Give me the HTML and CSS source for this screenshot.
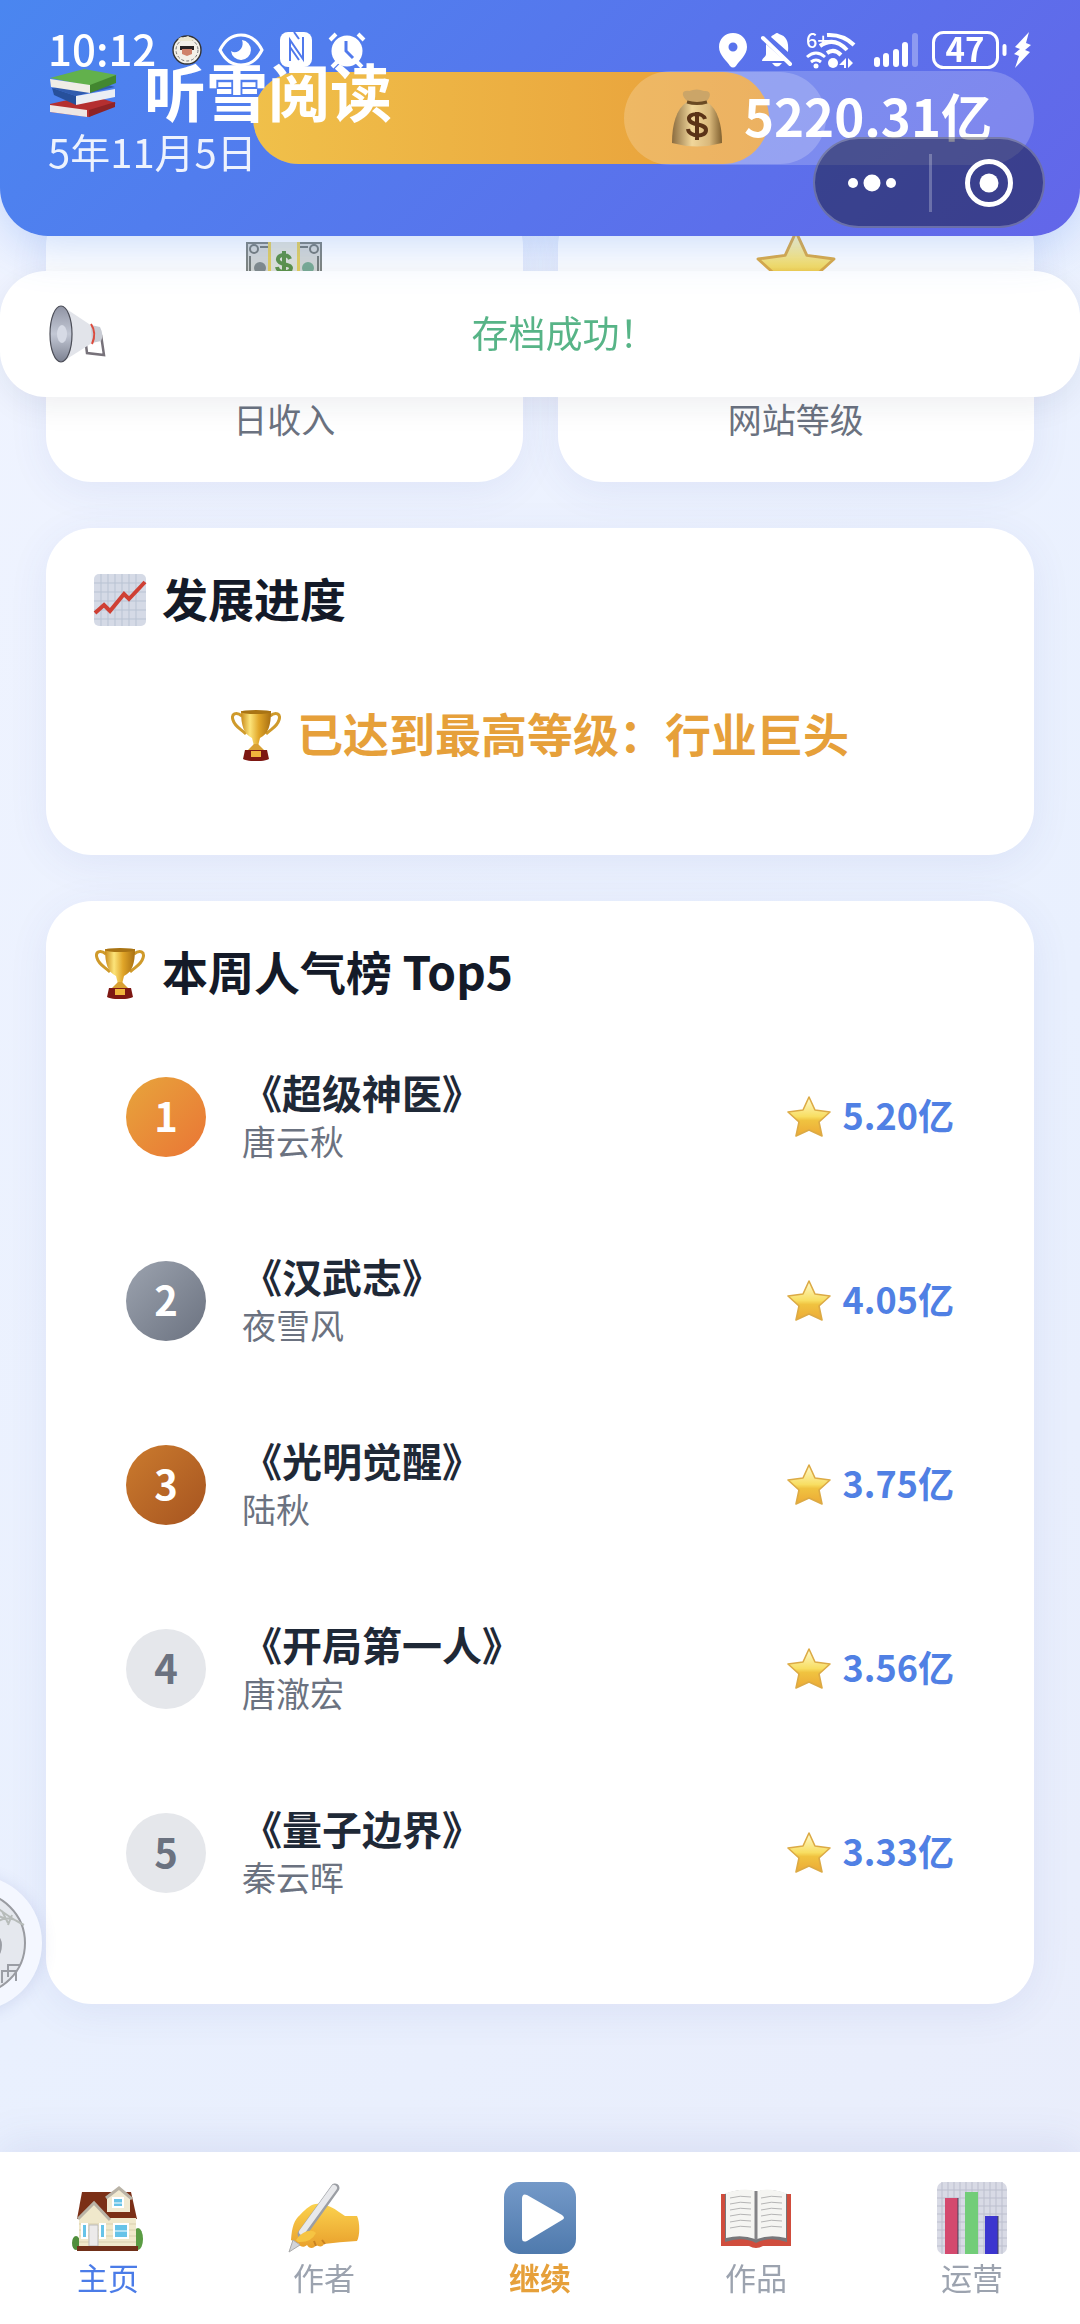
FILE: index.html
```html
<!DOCTYPE html>
<html lang="zh-CN">
<head>
  <meta charset="UTF-8">
  <meta name="viewport" content="width=device-width, initial-scale=1.0">
  <title>听雪阅读</title>
  <link rel="stylesheet" href="styles.css">
</head>
<body>
  <!-- shared icons -->
  <svg class="icon-defs" aria-hidden="true">
    <defs>
      <linearGradient id="starFill" x1="0" y1="0" x2="0" y2="1">
        <stop offset="0" stop-color="#fffbd0"/>
        <stop offset="0.5" stop-color="#f8de62"/>
        <stop offset="0.6" stop-color="#f0c340"/>
        <stop offset="1" stop-color="#eca936"/>
      </linearGradient>
      <linearGradient id="cupFill" x1="0" y1="0" x2="1" y2="0">
        <stop offset="0" stop-color="#c98a1a"/>
        <stop offset="0.3" stop-color="#fce47a"/>
        <stop offset="0.6" stop-color="#e0a528"/>
        <stop offset="1" stop-color="#a86f12"/>
      </linearGradient>
      <linearGradient id="bagFill" x1="0" y1="0" x2="1" y2="0">
        <stop offset="0" stop-color="#8b6c3f"/>
        <stop offset="0.4" stop-color="#f1d79b"/>
        <stop offset="0.75" stop-color="#d9b87b"/>
        <stop offset="1" stop-color="#80602f"/>
      </linearGradient>
      <linearGradient id="playFill" x1="0" y1="0" x2="0" y2="1">
        <stop offset="0" stop-color="#7499c8"/>
        <stop offset="1" stop-color="#4f7aad"/>
      </linearGradient>
      <linearGradient id="hornFill" x1="0" y1="0" x2="0" y2="1">
        <stop offset="0" stop-color="#8f93a3"/>
        <stop offset="0.5" stop-color="#c3c8d5"/>
        <stop offset="1" stop-color="#7c8191"/>
      </linearGradient>
      <linearGradient id="handFill" x1="0" y1="0" x2="0" y2="1">
        <stop offset="0" stop-color="#fbd24e"/>
        <stop offset="1" stop-color="#e9a02c"/>
      </linearGradient>
    </defs>
    <symbol id="star" viewBox="0 0 44 42">
      <path d="M22 1l6 13 15 2-11 10 3 14-13-6-13 6 3-14L1 16l15-2z" fill="url(#starFill)" stroke="#dcaa45" stroke-width="1.6" stroke-linejoin="round"/>
    </symbol>
    <symbol id="trophy" viewBox="0 0 50 52">
      <path d="M11 7C5 2 0 5 2 11c2 7 8 9 13 14M39 7c6-5 11-2 9 4-2 7-8 9-13 14" fill="none" stroke="#cf9a2b" stroke-width="3"/>
      <path d="M10 2h30c0 15-3 23-11 27l-2 8h-4l-2-8C13 25 10 17 10 2z" fill="url(#cupFill)"/>
      <ellipse cx="25" cy="3" rx="15" ry="2" fill="#a97414"/>
      <path d="M23 35h4l6 6H17z" fill="#d8a033"/>
      <path d="M14 41h22l2 9c-6 3-20 3-26 0z" fill="#7d1712"/>
      <rect x="20" y="42" width="10" height="6" fill="#efb43c"/>
    </symbol>
  </svg>

  <header class="header">
    <div class="progress-track"><div class="progress-fill"></div></div>

    <div class="status-bar">
      <div class="status-left">
        <span class="clock">10:12</span>
        <svg width="30" height="30" viewBox="0 0 30 30">
          <circle cx="15" cy="15" r="14" fill="#f3f0e8" stroke="#333" stroke-width="1.4"/>
          <circle cx="15" cy="15" r="11" fill="none" stroke="#777" stroke-dasharray="3 2"/>
          <path d="M8 11h14v4H8z" fill="#282222"/>
          <path d="M10 14h10v5l-5 2-5-2z" fill="#cf826b"/>
          <path d="M6 4l3-2 3 1 4-2 3 2 4 1-3 2H8z" fill="#ece7cf"/>
        </svg>
        <svg width="46" height="36" viewBox="0 0 46 36">
          <path d="M2 18C12-2 34-2 44 18 34 38 12 38 2 18z" fill="none" stroke="#fff" stroke-width="3"/>
          <path d="M24 8a10 10 0 1 1-11 11c6 4 14-3 11-11z" fill="#fff"/>
        </svg>
        <svg width="32" height="36" viewBox="0 0 32 36">
          <rect width="32" height="35" rx="8" fill="#fff"/>
          <path d="M10 29V8l13 19V5M10 15l9 13" fill="none" stroke="#5079ec" stroke-width="2"/>
          <path d="M14 0l5 7" stroke="#5079ec" stroke-width="2"/>
        </svg>
        <svg width="38" height="36" viewBox="0 0 38 36">
          <circle cx="19" cy="19" r="15.5" fill="#fff"/>
          <path d="M2 8l6-6M36 8l-6-6M9 30l-5 5M29 30l5 5" stroke="#fff" stroke-width="4"/>
          <path d="M18 9v10l7 7" fill="none" stroke="#5079ec" stroke-width="3"/>
        </svg>
      </div>
      <div class="status-right">
        <svg width="28" height="36" viewBox="0 0 28 36">
          <path fill-rule="evenodd" d="M14 1C6 1 0 7 0 15c0 8 8 14 11 19q3 3 6 0c3-5 11-11 11-19C28 7 22 1 14 1zm0 9.5a4.500 4.500 0 1 1 0 9 4.500 4.500 0 0 1 0-9z" fill="#fff"/>
        </svg>
        <svg width="31" height="36" viewBox="0 0 31 36">
          <path d="M10 5c1-2 3-2 4-3q2-2 4 0c7 2 10 7 9 18zM5 12l19 17H1c0-3 4-4 4-7zM11 31h10q-5 7-10 0z" fill="#fff"/>
          <path d="M2 6l27 26" stroke="#fff" stroke-width="4" stroke-linecap="round"/>
        </svg>
        <svg width="54" height="38" viewBox="0 0 54 38">
          <text x="0" y="17" class="wifi-gen">6+</text>
          <g fill="none" stroke="#fff" stroke-width="4">
            <path d="M21 4q16-1 27 10M14 15q14-10 27 4M21 22q7-5 14 2"/>
            <path d="M1 26q9-8 18 0M5 31q5-4 10 0" stroke-width="3"/>
          </g>
          <circle cx="10" cy="35" r="2.5" fill="#fff"/>
          <circle cx="27" cy="32" r="5" fill="#fff"/>
          <path d="M40 27v10h-2v-3h-5zM42 27l5 5-5 5z" fill="#fff"/>
        </svg>
        <svg width="44" height="36" viewBox="0 0 44 36">
          <g stroke="#fff" stroke-width="6" stroke-linecap="round">
            <path d="M3 28v4M12 24v8M22 20v12M31 13v19"/>
            <path d="M41 4v28" opacity="0.3"/>
          </g>
        </svg>
        <svg width="99" height="38" viewBox="0 0 99 38">
          <rect x="1.5" y="1.5" width="64" height="35" rx="10" fill="none" stroke="#fff" stroke-width="3"/>
          <text x="33" y="31" class="battery-text">47</text>
          <path d="M72.500 15v8" stroke="#fff" stroke-width="4" stroke-linecap="round"/>
          <path d="M97 1L83 16l5 2-6 5 5 2-4 12 15-16-5-2 6-5-5-2z" fill="#fff"/>
        </svg>
      </div>
    </div>

    <div class="header-row">
      <div class="brand">
        <h1>
          <svg width="70" height="50" viewBox="0 0 70 50">
            <path d="M2 35l40-9 26 8-27 14-39-5z" fill="#b52f30"/>
            <path d="M2 36l37 5v7L2 43z" fill="#eee6e3"/>
            <path d="M41 41l26-8v5L41 48z" fill="#8f2325"/>
            <path d="M4 19l24 8 39-9-27-8z" fill="#315cae"/>
            <path d="M28 27l39-7v8l-39 8z" fill="#eaeef4"/>
            <path d="M4 19l24 8v9L6 26z" fill="#27509b"/>
            <path d="M2 9l34-9 33 6-27 11z" fill="#62b14c"/>
            <path d="M2 10l40 6v8L3 18z" fill="#efede6"/>
            <path d="M42 16L68 6v8L42 24z" fill="#42872f"/>
          </svg>
          <span>听雪阅读</span>
        </h1>
        <p class="game-date">5年11月5日</p>
      </div>
      <div class="money">
        <svg width="50" height="58" viewBox="0 0 50 58">
          <path d="M15 13C4 20 0 36 0 54q25 7 50 0c0-18-4-34-15-41z" fill="url(#bagFill)"/>
          <path d="M16 13C8 6 10 1 17 2q8-3 15 0c7-1 8 5 2 11z" fill="#cba568"/>
          <path d="M15 13q10 3 20 0" fill="none" stroke="#6b4a23" stroke-width="3"/>
          <path d="M33 30c-2-7-17-6-16 0 1 7 17 4 17 11 0 8-17 7-18-1M25 23v28" fill="none" stroke="#5b3317" stroke-width="4"/>
        </svg>
        <span>5220.31亿</span>
      </div>
    </div>

    <div class="capsule">
      <button type="button" aria-label="更多">
        <svg width="50" height="20" viewBox="0 0 50 20" fill="#fff">
          <circle cx="6" cy="10" r="5"/><circle cx="25" cy="10" r="8.5"/><circle cx="44" cy="10" r="5"/>
        </svg>
      </button>
      <button type="button" aria-label="关闭">
        <svg width="50" height="50" viewBox="0 0 50 50">
          <circle cx="25" cy="25" r="21.5" fill="none" stroke="#fff" stroke-width="5"/>
          <circle cx="25" cy="25" r="9.5" fill="#fff"/>
        </svg>
      </button>
    </div>
  </header>

  <div class="toast" role="status">
    <svg width="58" height="58" viewBox="0 0 58 58">
      <path d="M38 40l1 8 17 2-3-20" fill="none" stroke="#77727a" stroke-width="2.5"/>
      <path d="M14 1l30 20q6 8 0 17L14 57z" fill="#e2e4ea"/>
      <path d="M43 20l9 2q4 8 1 14l-9 2z" fill="#c9ccd4"/>
      <path d="M43 19q6 9 1 20" fill="none" stroke="#dc4b3d" stroke-width="2"/>
      <ellipse cx="13" cy="29" rx="11" ry="28" fill="url(#hornFill)" stroke="#4b4d57" stroke-width="1.2"/>
      <ellipse cx="14" cy="29" rx="5" ry="9" fill="#d6dae5"/>
    </svg>
    <p>存档成功！</p>
  </div>

  <main class="content">
    <!-- stats -->
    <section class="stats">
      <div class="card stat-card">
        <svg width="76" height="76" viewBox="0 0 76 76">
          <rect x="1" y="13" width="74" height="50" fill="#d6d8d4" stroke="#81857f" stroke-width="2"/>
          <g fill="none" stroke="#777c77" stroke-width="2">
            <circle cx="8" cy="19" r="4"/><circle cx="68" cy="19" r="4"/>
            <path d="M14 17h9M53 17h9M4 26v30M72 26v30"/>
          </g>
          <circle cx="14" cy="38" r="6" fill="#838b8b"/><circle cx="62" cy="38" r="6" fill="#7aab92"/>
          <rect x="22" y="12" width="32" height="52" fill="#e5cf5b"/>
          <rect x="25" y="12" width="26" height="52" fill="#e3e4da"/>
          <path d="M44 29c-2-6-13-5-12 1s13 3 13 8-13 6-14-1M38 21v28" fill="none" stroke="#5d9246" stroke-width="4"/>
        </svg>
        <p>日收入</p>
      </div>
      <div class="card stat-card">
        <svg width="80" height="76"><use href="#star"/></svg>
        <p>网站等级</p>
      </div>
    </section>

    <!-- progress -->
    <section class="card">
      <h2>
        <svg width="52" height="52" viewBox="0 0 52 52">
          <rect width="52" height="52" rx="5" fill="#d5dae6"/>
          <path d="M7 0v52M14 0v52M21 0v52M28 0v52M35 0v52M42 0v52M0 9h52M0 18h52M0 27h52M0 36h52M0 45h52" stroke="#b9c3d3"/>
          <path d="M1 39l9-8 6 6 14-17 5 5L51 8" fill="none" stroke="#cf4034" stroke-width="4"/>
        </svg>
        <span>发展进度</span>
      </h2>
      <p class="max-level">
        <svg width="50" height="52"><use href="#trophy"/></svg>
        <span>已达到最高等级：行业巨头</span>
      </p>
    </section>

    <!-- weekly ranking -->
    <section class="card">
      <h2>
        <svg width="52" height="52"><use href="#trophy"/></svg>
        <span>本周人气榜 Top5</span>
      </h2>
      <ol class="rank-list">
        <li>
          <span class="rank rank-1">1</span>
          <div class="book"><h3>《超级神医》</h3><p>唐云秋</p></div>
          <div class="score"><svg width="44" height="42"><use href="#star"/></svg><span>5.20亿</span></div>
        </li>
        <li>
          <span class="rank rank-2">2</span>
          <div class="book"><h3>《汉武志》</h3><p>夜雪风</p></div>
          <div class="score"><svg width="44" height="42"><use href="#star"/></svg><span>4.05亿</span></div>
        </li>
        <li>
          <span class="rank rank-3">3</span>
          <div class="book"><h3>《光明觉醒》</h3><p>陆秋</p></div>
          <div class="score"><svg width="44" height="42"><use href="#star"/></svg><span>3.75亿</span></div>
        </li>
        <li>
          <span class="rank">4</span>
          <div class="book"><h3>《开局第一人》</h3><p>唐澈宏</p></div>
          <div class="score"><svg width="44" height="42"><use href="#star"/></svg><span>3.56亿</span></div>
        </li>
        <li>
          <span class="rank">5</span>
          <div class="book"><h3>《量子边界》</h3><p>秦云晖</p></div>
          <div class="score"><svg width="44" height="42"><use href="#star"/></svg><span>3.33亿</span></div>
        </li>
      </ol>
    </section>
  </main>

  <button type="button" class="float-ball" aria-label="悬浮球">
    <svg width="104" height="104" viewBox="0 0 104 104">
      <circle cx="52" cy="52" r="51" fill="#e5e8ee" stroke="#999ba1" stroke-width="2"/>
      <path d="M74 16q8 6 14 10t14 8M76 30q12-6 22 2M80 20l6 12M90 24l-4 10M74 24l10 4" fill="none" stroke="#b7bcba" stroke-width="2"/>
      <path d="M80 92V80h14M86 86V74h12M86 80h8v10" fill="none" stroke="#9a9da4" stroke-width="2"/>
      <path d="M77 48q3 6 0 14" fill="none" stroke="#9a9da4" stroke-width="3"/>
    </svg>
  </button>

  <nav class="tab-bar">
    <a href="#home" class="active">
      <svg width="72" height="72" viewBox="0 0 72 72">
        <ellipse cx="4" cy="61" rx="4" ry="7" fill="#4f8e3b"/>
        <ellipse cx="66" cy="57" rx="5" ry="11" fill="#5a9c43"/>
        <path d="M10 10h49l6 27H5z" fill="#7b2f16"/>
        <path d="M7 36L22 22l15 14h27v28H7z" fill="#f0e8cb"/>
        <path d="M7 42h57M7 48h57M7 54h57M7 60h57" stroke="#d9cfae"/>
        <path d="M35 15L47 5l11 10v15H35z" fill="#f1ead2"/>
        <path d="M34 16L47 6l13 11M6 37l16-16 16 17" fill="none" stroke="#b9b3a6" stroke-width="3"/>
        <path d="M41 16h10v9H41zM42 42h14v14H42zM10 42h5v14h-5zM28 42h5v14h-5z" fill="#67c3e8" stroke="#fff" stroke-width="2"/>
        <path d="M17 43h9v21h-9z" fill="#eceaea" stroke="#bbb"/>
        <path d="M42 49h14M41 21h10" stroke="#fff"/>
        <path d="M5 64h61v5H5z" fill="#713019"/>
      </svg>
      主页
    </a>
    <a href="#authors">
      <svg width="72" height="72" viewBox="0 0 72 72">
        <path d="M3 58C4 45 6 38 12 33c7-7 12-12 20-11q10 1 19 8l6 4h12c3 6 3 20 0 25q-18 1-33 3c-1 3-5 3-8 1-2 4-7 4-9 0-3 3-7 2-8-1z" fill="url(#handFill)"/>
        <path d="M28 64l-2-5M37 62l-3-4" fill="none" stroke="#c98222" stroke-width="2"/>
        <path d="M47 6L14 52" stroke="#9b9ea4" stroke-width="9" stroke-linecap="round"/>
        <path d="M46 6L14 50" stroke="#e8e9ec" stroke-width="6" stroke-linecap="round"/>
        <path d="M5 58l7 5-11 7z" fill="#d2d4d9" stroke="#aaa"/>
        <path d="M8 58C15 48 24 47 28 51q-5 10-18 9z" fill="#f6c442"/>
      </svg>
      作者
    </a>
    <a href="#continue" class="continue">
      <svg width="72" height="72" viewBox="0 0 72 72">
        <rect width="72" height="72" rx="15" fill="url(#playFill)"/>
        <path d="M18 17q0-6 5-4l35 20q4 3 0 5L23 59q-5 2-5-3z" fill="#fff"/>
      </svg>
      继续
    </a>
    <a href="#works">
      <svg width="72" height="72" viewBox="0 0 72 72">
        <path d="M1 12h70v52H43q-7 4-14 0H1z" fill="#d04d3d"/>
        <path d="M5 12q18-7 31-2 13-5 31 2v48q-18-6-31 1-13-7-31-1z" fill="#77777a"/>
        <path d="M6 11q18-6 29-2v48q-13-5-29-1zM66 11q-18-6-29-2v48q13-5 29-1z" fill="#f5f5f2"/>
        <path d="M36 9v49" stroke="#838386" stroke-width="3"/>
        <path d="M10 16q10-3 21-1M10 22q10-3 21-1M10 28q10-3 21-1M10 34q10-3 21-1M10 40q10-3 21-1M10 46q10-3 21-1M41 16q10-3 21-1M41 22q10-3 21-1M41 28q10-3 21-1M41 34q10-3 21-1M41 40q10-3 21-1M41 46q10-3 21-1" fill="none" stroke="#b5b5b5"/>
      </svg>
      作品
    </a>
    <a href="#operation">
      <svg width="72" height="72" viewBox="0 0 72 72">
        <rect x="1" width="70" height="72" rx="7" fill="#d8dae5"/>
        <path d="M6 0v72M12 0v72M18 0v72M24 0v72M30 0v72M36 0v72M42 0v72M48 0v72M54 0v72M60 0v72M66 0v72M1 8h70M1 16h70M1 24h70M1 32h70M1 40h70M1 48h70M1 56h70M1 64h70" stroke="#bcbfce"/>
        <rect x="9" y="16" width="13" height="56" fill="#d4496e"/>
        <rect x="29" y="10" width="13" height="62" fill="#72cd78"/>
        <rect x="49" y="34" width="13" height="38" fill="#3c35cf"/>
        <path d="M22 16v56M62 34v38" stroke="#42435a"/>
      </svg>
      运营
    </a>
  </nav>
</body>
</html>
```

FILE: styles.css
```css
/* Global Styles */
* {
  box-sizing: border-box;
  margin: 0;
  padding: 0;
}

body {
  min-height: 100vh;
  font-family: "Noto Sans CJK SC", "Noto Sans", sans-serif;
  background: linear-gradient(135deg, #f0f4ff 0%, #e9f0fe 60%, #e9edfb 100%);
  color: #141a28;
}

svg {
  display: block;
  flex-shrink: 0;
  overflow: visible;
}

button {
  border: none;
  background: none;
  cursor: pointer;
}

.icon-defs {
  position: absolute;
  width: 0;
  height: 0;
}

/* Header */
.header {
  position: fixed;
  top: 0;
  left: 0;
  right: 0;
  z-index: 20;
  height: 236px;
  padding: 58px 46px 0 48px;
  color: #fff;
  background: linear-gradient(135deg, #4a86f0 0%, #6366e9 100%);
  border-radius: 0 0 48px 48px;
  box-shadow: 0 8px 48px rgba(74, 134, 240, 0.3);
}

.progress-track {
  position: absolute;
  top: 72px;
  left: 253px;
  right: 254px;
  height: 92px;
  border-radius: 46px;
  background: rgba(255, 255, 255, 0.2);
}

.progress-fill {
  width: 90%;
  height: 100%;
  border-radius: 46px;
  background: linear-gradient(90deg, #f0c04a, #e89e3a);
}

.status-bar {
  position: absolute;
  top: 20px;
  left: 48px;
  right: 49px;
  display: flex;
  align-items: center;
  justify-content: space-between;
  height: 60px;
}

.status-left,
.status-right {
  display: flex;
  align-items: center;
  gap: 14px;
}

.status-left {
  gap: 16px;
}

.clock {
  padding-bottom: 4px;
  font-size: 42px;
  line-height: 56px;
  font-weight: 500;
}

.wifi-gen {
  font-size: 20px;
  font-weight: 500;
  fill: #fff;
}

.battery-text {
  font-size: 33px;
  font-weight: 700;
  fill: #fff;
  text-anchor: middle;
}

.header-row {
  position: relative;
  display: flex;
  justify-content: space-between;
  align-items: flex-start;
}

.brand h1 {
  display: flex;
  align-items: center;
  gap: 26px;
  font-size: 62px;
  line-height: 64px;
  font-weight: 700;
}

.brand h1 svg {
  margin-top: 8px;
}

.game-date {
  font-size: 40px;
  line-height: 58px;
  opacity: 0.9;
}

.money {
  display: flex;
  align-items: center;
  gap: 22px;
  height: 94px;
  margin-top: 13px;
  padding: 0 42px 0 48px;
  border-radius: 47px;
  background: rgba(255, 255, 255, 0.2);
  font-size: 51px;
  font-weight: 700;
}

.capsule {
  position: absolute;
  top: 137px;
  right: 35px;
  display: flex;
  width: 232px;
  height: 91px;
  border: 2px solid rgba(255, 255, 255, 0.25);
  border-radius: 46px;
  background: rgba(20, 22, 50, 0.5);
}

.capsule button {
  display: flex;
  flex: 1;
  align-items: center;
  justify-content: center;
}

.capsule button + button::before {
  content: "";
  width: 3px;
  height: 58px;
  margin-right: 32px;
  background: rgba(255, 255, 255, 0.25);
}

.capsule button + button {
  justify-content: flex-start;
}

/* Toast */
.toast {
  position: fixed;
  top: 271px;
  left: 0;
  right: 0;
  z-index: 10;
  display: flex;
  align-items: center;
  gap: 4px;
  height: 126px;
  padding: 0 62px 0 48px;
  border-radius: 46px;
  background: #fff;
  box-shadow: 0 8px 32px rgba(30, 40, 80, 0.08);
}

.toast p {
  flex: 1;
  padding-bottom: 4px;
  font-size: 37px;
  text-align: center;
  color: #57b487;
}

/* Cards */
.content {
  display: flex;
  flex-direction: column;
  gap: 46px;
  padding: 200px 46px 320px;
}

.card {
  padding: 48px;
  border-radius: 46px;
  background: #fff;
  box-shadow: 0 8px 40px rgba(70, 80, 160, 0.08);
}

.card h2 {
  display: flex;
  align-items: center;
  gap: 16px;
  height: 48px;
  font-size: 46px;
  line-height: 48px;
  font-weight: 700;
}

/* lift the text to the optical middle of its icon */
.money span,
.card h2 span,
.max-level span,
.score span {
  padding-bottom: 6px;
}

.stats {
  display: grid;
  grid-template-columns: 1fr 1fr;
  gap: 35px;
}

.stat-card {
  display: flex;
  flex-direction: column;
  align-items: center;
  justify-content: space-between;
  height: 282px;
  padding: 30px 0 39px;
  font-size: 34px;
  line-height: 48px;
  color: #6b7280;
}

.max-level {
  display: flex;
  align-items: center;
  justify-content: center;
  gap: 16px;
  height: 144px;
  margin-top: 39px;
  font-size: 46px;
  font-weight: 700;
  color: #e6a03a;
}

/* Ranking */
.rank-list {
  margin-top: 39px;
  list-style: none;
}

.rank-list li {
  display: flex;
  align-items: center;
  gap: 36px;
  margin-bottom: 22px;
  padding: 30px 32px;
}

.rank {
  width: 80px;
  height: 80px;
  border-radius: 50%;
  font-size: 40px;
  line-height: 76px;
  font-weight: 700;
  text-align: center;
  color: #6b7280;
  background: #e5e7eb;
}

.rank-1,
.rank-2,
.rank-3 {
  color: #fff;
}

.rank-1 {
  background: linear-gradient(135deg, #e7a53c, #ea7535);
}

.rank-2 {
  background: linear-gradient(135deg, #9ca3af, #6b7280);
}

.rank-3 {
  background: linear-gradient(135deg, #cb7b2e, #a65420);
}

.book {
  flex: 1;
  padding-bottom: 4px;
}

.book h3 {
  font-size: 40px;
  line-height: 52px;
  font-weight: 700;
  color: #1f2937;
}

.book p {
  font-size: 34px;
  line-height: 46px;
  color: #6b7280;
}

.score {
  display: flex;
  align-items: center;
  gap: 12px;
  font-size: 36px;
  font-weight: 700;
  color: #5080e4;
}

/* Floating button */
.float-ball {
  position: fixed;
  top: 1875px;
  left: -94px;
  z-index: 5;
  padding: 16px;
  border-radius: 50%;
  background: #f4f7ff;
  box-shadow: 0 2px 16px rgba(70, 80, 160, 0.15);
}

/* Bottom tabs */
.tab-bar {
  position: fixed;
  left: 0;
  right: 0;
  bottom: 0;
  z-index: 10;
  display: flex;
  height: 172px;
  padding-top: 30px;
  background: #fff;
  box-shadow: 0 -8px 40px rgba(70, 80, 160, 0.1);
}

.tab-bar a {
  display: flex;
  flex: 1;
  flex-direction: column;
  align-items: center;
  font-size: 31px;
  line-height: 45px;
  color: #9ca3af;
  text-decoration: none;
}

.tab-bar .active {
  color: #4b7ce8;
}

.tab-bar .continue {
  color: #e6a03a;
  font-weight: 700;
}
```
